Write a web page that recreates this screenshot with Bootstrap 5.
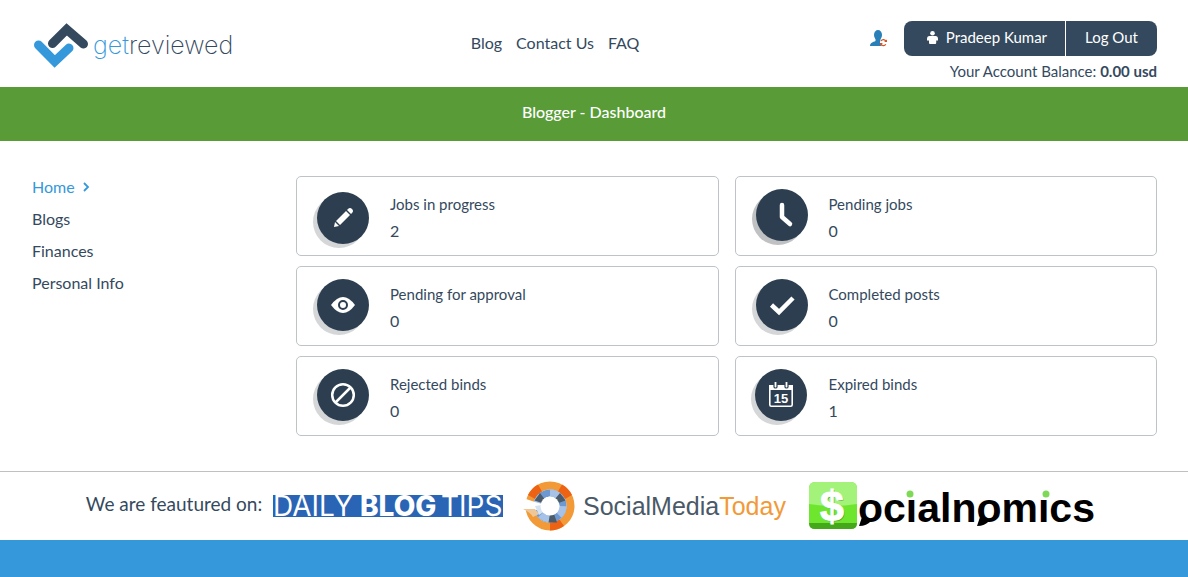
<!DOCTYPE html>
<html lang="en">
<head>
<meta charset="utf-8">
<meta name="viewport" content="width=device-width, initial-scale=1">
<title>Blogger - Dashboard</title>
<link href="https://cdn.jsdelivr.net/npm/bootstrap@5.3.0/dist/css/bootstrap.min.css" rel="stylesheet">
<style>
:root { --navy: #34495e; --sky: #3498db; --leaf: #589b37; }
body { font-family: Lato, "Open Sans", sans-serif; color: var(--navy); font-size: 15px; line-height: 20px; }
a { color: var(--navy); text-decoration: none; }
a:hover { color: var(--sky); }
.page-pad { padding-left: 32px; padding-right: 31px; }
.site-head { min-height: 87px; padding-top: 21px; }
.brand { width: 39%; }
.brand-name { font-family: Inter, sans-serif; font-weight: 200; font-size: 25px; line-height: 28px; margin-top: 10px; margin-left: 4px; }
.brand-name span { color: var(--sky); }
.top-nav { margin-top: 12px; gap: 14px; font-size: 16px; }
.btn-user { --bs-btn-color: #fff; --bs-btn-bg: var(--navy); --bs-btn-hover-color: #fff; --bs-btn-hover-bg: #2c3e50; --bs-btn-border-width: 0; --bs-btn-border-radius: 8px; font-size: 15px; line-height: 19px; padding: 7px 19px 9px; }
.btn-user + .btn-user { border-left: 1px solid #fff; }
.user-row { height: 35px; }
.balance { margin-top: 5px; }
.title-bar { background: var(--leaf); color: #fff; padding: 14px 0 18px; font-size: 16px; line-height: 22px; font-weight: 500; }
.side-nav { width: 264px; gap: 12px; font-size: 16px; padding-top: 1px; }
.side-nav .active { color: var(--sky); }
.dash { padding-top: 35px; padding-bottom: 35px; }
.stat { height: 80px; border: 1px solid #bdc3c7; border-radius: 5px; padding-left: 13px; gap: 20px; }
.stat-text { padding-top: 17px; }
.stat-num { font-size: 16px; margin-top: 7px; }
.featured { border-top: 1px solid #c0c0c0; min-height: 69px; padding-right: 6px; }
.featured-label { font-size: 19px; margin-right: 11px; margin-bottom: 4px; }
.foot-bar { background: var(--sky); height: 37px; }
</style>
</head>
<body>
<header class="site-head page-pad d-flex align-items-start">
  <a href="#" class="brand d-flex align-items-start" aria-label="getreviewed">
    <svg width="57" height="48" viewBox="0 0 57 48" fill="none" stroke-width="9" stroke-linecap="round"><path d="M20.500 22.500 34.700 8.300 51.500 23" stroke="#34495e"/><path d="M6.500 24 22.700 40.500 37 27" stroke="#3498db"/></svg>
    <div class="brand-name"><span>get</span>reviewed</div>
  </a>
  <nav class="top-nav d-flex"><a href="#">Blog</a><a href="#">Contact Us</a><a href="#">FAQ</a></nav>
  <div class="ms-auto text-end">
    <div class="user-row d-flex align-items-center justify-content-end">
      <a href="#" class="me-3" aria-label="Switch account"><svg class="d-block" width="18" height="17" viewBox="0 0 18 17"><ellipse cx="8" cy="5" rx="4" ry="5" fill="#2980b9"/><path d="M5.500 8h5v3l4 2v3H0c0-3 3-4 5.500-5z" fill="#2980b9"/><circle cx="13.500" cy="12.500" r="3.500" fill="#fff"/><path d="M16 11.500a2.700 2.700 0 0 0-5-.5M10.800 13.700a2.700 2.700 0 0 0 5 .5" fill="none" stroke="#d35424" stroke-width="1.200"/><path d="M17 9.500v2.500H14zM10 15.500v-2.500H13z" fill="#d35424"/></svg></a>
      <div class="btn-group h-100"><button type="button" class="btn btn-user"><svg class="ms-1 me-1 mb-1" width="11" height="13" viewBox="0 0 11 13" fill="#fff"><circle cx="5.500" cy="2.300" r="2.300"/><path d="M2.500 5h6Q11 5 11 8v1.500H9.200V12q0 1-1 1H3q-1 0-1-1V9.500H0V8q0-3 2.500-3z"/></svg> Pradeep Kumar</button><button type="button" class="btn btn-user">Log Out</button></div>
    </div>
    <div class="balance">Your Account Balance: <b>0.00 usd</b></div>
  </div>
</header>
<h1 class="title-bar text-center m-0">Blogger - Dashboard</h1>
<main class="dash page-pad d-flex">
  <nav class="side-nav d-flex flex-column flex-shrink-0">
    <a href="#" class="active">Home <svg class="ms-1 mb-1" width="7" height="10" viewBox="0 0 7 10" fill="none" stroke="#3498db" stroke-width="1.800"><path d="m1 1 4 4-4 4"/></svg></a>
    <a href="#">Blogs</a><a href="#">Finances</a><a href="#">Personal Info</a>
  </nav>
  <div class="flex-grow-1">
    <div class="row gx-3" style="--bs-gutter-y:10px">
      <div class="col-6"><div class="stat d-flex"><svg class="flex-shrink-0" width="60" height="78" viewBox="-34 -39 60 78"><circle cx="-5" cy="6" r="26" fill="#d5d6d8"/><g transform="translate(-1 2)"><circle r="26" fill="#2c3e50"/><path d="m-9 9 1-5 4 4z" fill="#fff"/><path d="M-7 3 3-7l4 4L-3 7zM4-8l1-1q2-2 4 0t0 4L8-4z" fill="#fff"/></g></svg><div class="stat-text"><div>Jobs in progress</div><div class="stat-num">2</div></div></div></div>
      <div class="col-6"><div class="stat d-flex"><svg class="flex-shrink-0" width="60" height="78" viewBox="-34 -39 60 78"><circle cx="-5" cy="3" r="26" fill="#c0c1c3"/><circle cx="-1" cy="-1" r="26" fill="#2c3e50"/><path d="M-1-11V1l8 7" fill="none" stroke="#fff" stroke-width="4.500" stroke-linecap="round" stroke-linejoin="round"/></svg><div class="stat-text"><div>Pending jobs</div><div class="stat-num">0</div></div></div></div>
      <div class="col-6"><div class="stat d-flex"><svg class="flex-shrink-0" width="60" height="78" viewBox="-34 -39 60 78"><circle cx="-5" cy="3" r="26" fill="#d5d6d8"/><circle cx="-1" cy="-1" r="26" fill="#2c3e50"/><path d="M-13-1Q-7-9-1-9T11-1Q5 7-1 7T-13-1" fill="#fff"/><circle cx="-1" cy="-1" r="4" fill="#fff" stroke="#2c3e50" stroke-width="2"/></svg><div class="stat-text"><div>Pending for approval</div><div class="stat-num">0</div></div></div></div>
      <div class="col-6"><div class="stat d-flex"><svg class="flex-shrink-0" width="60" height="78" viewBox="-34 -39 60 78"><circle cx="-5" cy="3" r="26" fill="#d5d6d8"/><circle cx="-1" cy="-1" r="26" fill="#2c3e50"/><path d="m-11.500-1 7.500 7L10-8" fill="none" stroke="#fff" stroke-width="4.500"/></svg><div class="stat-text"><div>Completed posts</div><div class="stat-num">0</div></div></div></div>
      <div class="col-6"><div class="stat d-flex"><svg class="flex-shrink-0" width="60" height="78" viewBox="-34 -39 60 78"><circle cx="-5" cy="3" r="26" fill="#d5d6d8"/><g transform="translate(-1 -1)"><circle r="26" fill="#2c3e50"/><circle r="10.800" fill="none" stroke="#fff" stroke-width="2.500"/><path d="M-7.500 7.500 7.500-7.500" stroke="#fff" stroke-width="2.500"/></g></svg><div class="stat-text"><div>Rejected binds</div><div class="stat-num">0</div></div></div></div>
      <div class="col-6"><div class="stat d-flex"><svg class="flex-shrink-0" width="60" height="78" viewBox="-34 -39 60 78"><circle cx="-6" cy="3" r="26" fill="#d5d6d8"/><g transform="translate(-2 -1)"><circle r="26" fill="#2c3e50"/><rect x="-11.200" y="-9.200" width="22.400" height="20.400" rx="1.500" fill="none" stroke="#fff" stroke-width="1.600"/><path d="M-12-10h24v5h-24z" fill="#fff"/><path d="M-7-13v5q0 1 1.500 1T-4-8v-5M4-13v5q0 1 1.500 1T7-8v-5" fill="#fff" stroke="#2c3e50" stroke-width="1.200"/><text y="8" text-anchor="middle" font-family="Liberation Sans, sans-serif" font-weight="700" font-size="13" fill="#fff">15</text></g></svg><div class="stat-text"><div>Expired binds</div><div class="stat-num">1</div></div></div></div>
    </div>
  </div>
</main>
<section class="featured d-flex align-items-center justify-content-center">
  <span class="featured-label">We are feautured on:</span>
  <svg width="230" height="36" viewBox="0 0 230 36" style="margin-right:20px" role="img" aria-label="Daily Blog Tips"><rect y="7" width="230" height="22" fill="#2a64b5"/><g font-family="Inter, sans-serif" font-size="28" fill="#fff" font-weight="400"><text x="0" y="28">DAILY</text><text x="87" y="28" font-weight="800">BLOG</text><text x="168" y="28">TIPS</text></g></svg>
  <svg width="266" height="50" viewBox="0 0 266 50" style="margin-right:19px" role="img" aria-label="Social Media Today">
    <g fill="none" transform="translate(27 25)">
      <circle r="20.500" stroke="#f29a38" stroke-width="8"/>
      <path d="M-22-11A24.500 24.500 0 0 1-12-21.400L-8-14.500A16.500 16.500 0 0 0-15-7zM12-21.400A24.500 24.500 0 0 1 22-11L15-7A16.500 16.500 0 0 0 8-14.500zM14 20A24.500 24.500 0 0 1 0 24.500V16.500A16.500 16.500 0 0 0 9.500 13.500z" fill="#ee6214"/>
      <circle r="13" stroke="#6e99d0" stroke-width="7"/>
      <circle r="13" stroke="#a6c2e6" stroke-width="7" stroke-dasharray="10.210 10.210" transform="rotate(-90)"/>
      <path d="M-15.500-5.500-10-13l4.500 6-2.500 4zM10-13l5.500 7.500-7 2.500L5-7zM-1.500 16.500H7L4 8H0z" fill="#4a5b6b"/>
      <path d="M-27-8-15-4-8-2-13 4-28 4z" fill="#fff"/><path d="M-27 3h12l4 5-6 3q-3-5-10-8z" fill="#efc796"/><path d="m-15 0 7-1 3 6-6 4z" fill="#d5e2f2"/>
      <circle r="9.500" fill="#fff"/>
    </g>
    <text x="60" y="34" font-family="Liberation Sans, sans-serif" font-size="25" fill="#4a5968">SocialMedia<tspan fill="#f29a38">Today</tspan></text>
  </svg>
  <svg width="288" height="50" viewBox="0 0 288 50" role="img" aria-label="Socialnomics">
    <rect x="1" y="1" width="48" height="47" rx="6" fill="#6ee62e"/><path d="M1 42h48q0 6-6 6H7q-6 0-6-6z" fill="#44a81a"/><path d="M7 1h36q6 0 6 6v16q-24 4-48 0V7q0-6 6-6z" fill="#a3f27a"/>
    <text x="25" y="41" text-anchor="middle" font-family="Liberation Sans, sans-serif" font-weight="700" font-size="43" fill="#4d9e2d">$</text>
    <text x="24" y="40" text-anchor="middle" font-family="Liberation Sans, sans-serif" font-weight="700" font-size="43" fill="#fff" stroke="#fff">$</text>
    <text x="50" y="41" font-family="Liberation Sans, sans-serif" font-weight="700" font-size="41" fill="#000">ocialnomics</text>
    <g fill="#fff"><path d="M96 8h13v8H96zM232 8h13v8h-13z"/></g>
    <g fill="#7ed957"><circle cx="102" cy="13" r="3.500"/><circle cx="238" cy="13" r="3.500"/></g>
    <path d="M54 36 51 45q8 0 12-5zM172 36l-3 9q8 0 12-5z"/>
  </svg>
</section>
<footer class="foot-bar"></footer>
<script src="https://cdn.jsdelivr.net/npm/bootstrap@5.3.0/dist/js/bootstrap.bundle.min.js"></script>
</body>
</html>
